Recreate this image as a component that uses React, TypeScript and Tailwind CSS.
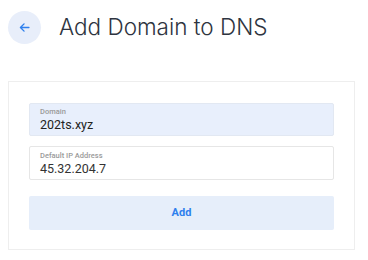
import React from "react";

export default function App() {
  return (
    <div className="w-[368px] h-[260px] bg-white" style={{ fontFamily: "Roboto, sans-serif" }}>
      <div className="flex items-center h-[53px] pl-[8px] pt-[1px]">
        <button className="w-[33px] h-[33px] rounded-full bg-[#e8eefa] flex items-center justify-center shrink-0">
          <svg width="11" height="11" viewBox="0 0 10 10" fill="none" stroke="#2f80ed" strokeWidth="1.25" strokeLinecap="round" strokeLinejoin="round">
            <path d="M9 5H1.3M4.6 1.7 1.3 5l3.3 3.3" />
          </svg>
        </button>
        <h1 className="ml-[18px] text-[22.5px] font-light text-[#2e3440] leading-none" style={{ fontFamily: "Inter, sans-serif" }}>
          Add Domain to DNS
        </h1>
      </div>
      <div className="mt-[28px] mx-[8px] w-[347px] border border-[#eeeeee] px-[20px] pt-[21px] pb-[19px] flex flex-col">
        <div className="h-[33px] rounded-[2px] bg-[#e8effc] border border-[#e2e8f2] px-[10px] flex flex-col justify-center">
          <span className="text-[7.5px] text-[#9a9a9a] font-medium leading-[10px]">Domain</span>
          <span className="text-[12.5px] text-[#222] leading-[15px]">202ts.xyz</span>
        </div>
        <div className="mt-[10px] h-[34px] rounded-[2px] bg-white border border-[#e6e6e6] px-[10px] flex flex-col justify-center">
          <span className="text-[7.5px] text-[#9a9a9a] font-medium leading-[10px]">Default IP Address</span>
          <span className="text-[12.5px] text-[#333] leading-[15px]">45.32.204.7</span>
        </div>
        <button className="mt-[16px] h-[34px] rounded-[2px] bg-[#e6eefa] text-[#2f80ed] text-[11px] font-bold flex items-center justify-center">
          Add
        </button>
      </div>
    </div>
  );
}
